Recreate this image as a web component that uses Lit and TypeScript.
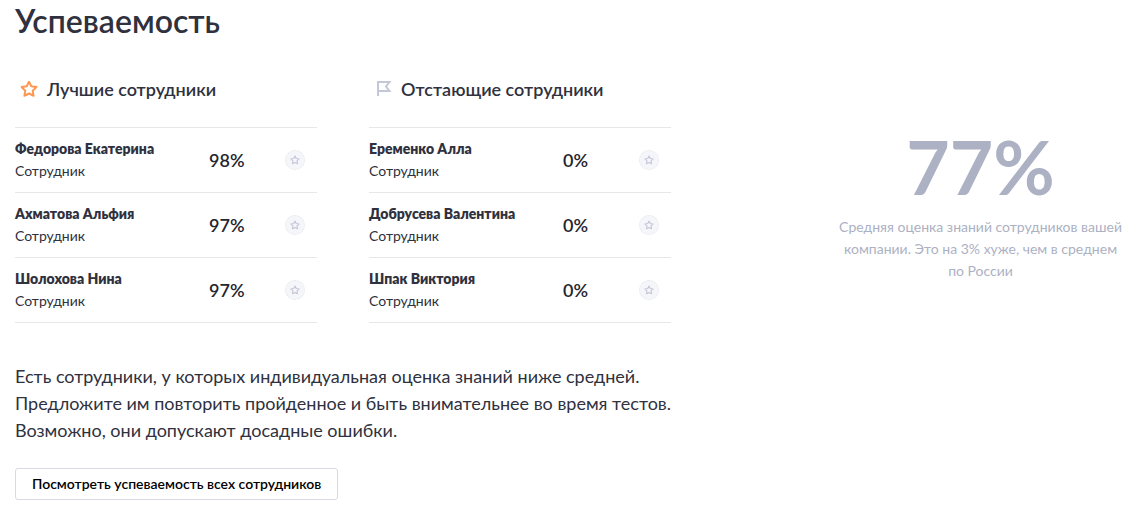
import { LitElement, html, css } from "lit";
import { customElement, property } from "lit/decorators.js";

interface Employee {
  name: string;
  role: string;
  score: number;
}

const best: Employee[] = [
  { name: "Федорова Екатерина", role: "Сотрудник", score: 98 },
  { name: "Ахматова Альфия", role: "Сотрудник", score: 97 },
  { name: "Шолохова Нина", role: "Сотрудник", score: 97 },
];

const lagging: Employee[] = [
  { name: "Еременко Алла", role: "Сотрудник", score: 0 },
  { name: "Добрусева Валентина", role: "Сотрудник", score: 0 },
  { name: "Шпак Виктория", role: "Сотрудник", score: 0 },
];

const starPath =
  "M9 1.8 L11.3 6.3 L16.4 7.1 L12.7 10.7 L13.6 15.8 L9 13.5 L4.4 15.8 L5.3 10.7 L1.6 7.1 L6.7 6.3 Z";

const starIcon = html`<svg class="icon star" viewBox="0 0 18 18" aria-hidden="true">
  <path d=${starPath} />
</svg>`;

const flagIcon = html`<svg class="icon flag" viewBox="0 0 18 18" aria-hidden="true">
  <path d="M4 16 V2 H15.5 L12 6.5 L15.5 11 H4" />
</svg>`;

@customElement("employee-list")
export class EmployeeList extends LitElement {
  @property({ attribute: false }) employees: Employee[] = [];

  static styles = css`
    :host {
      display: block;
    }
    .list {
      list-style: none;
      margin: 0;
      padding: 0;
      border-top: 1px solid #e6e7eb;
    }
    .row {
      display: grid;
      grid-template-columns: 194fr 76fr 32fr;
      align-items: center;
      height: 64px;
      border-bottom: 1px solid #e6e7eb;
    }
    .person {
      font-size: 14px;
      line-height: 22px;
      color: #2f313e;
      white-space: nowrap;
    }
    .name {
      font-weight: 800;
    }
    .score {
      font-size: 18px;
      line-height: 22px;
      font-weight: 600;
      color: #23252f;
    }
    .mark {
      display: flex;
      align-items: center;
      justify-content: center;
      width: 20px;
      height: 20px;
      padding: 0;
      border: 1px dotted #e3e5ee;
      border-radius: 50%;
      box-sizing: border-box;
      background: #f5f6fa;
    }
    .mark svg {
      width: 10px;
      height: 10px;
      fill: none;
      stroke: #c3c7d8;
      stroke-width: 2;
      stroke-linejoin: round;
    }
  `;

  render() {
    return html`<ul class="list">
      ${this.employees.map(
        (e) => html`<li class="row">
          <div class="person">
            <div class="name">${e.name}</div>
            <div>${e.role}</div>
          </div>
          <div class="score">${e.score}%</div>
          <button class="mark" type="button" aria-label="Отметить">
            <svg viewBox="0 0 18 18" aria-hidden="true"><path d=${starPath} /></svg>
          </button>
        </li>`
      )}
    </ul>`;
  }
}

@customElement("app-root")
export class AppRoot extends LitElement {
  static styles = css`
    :host {
      display: block;
      padding: 3px 15px 13px;
      background: #fff;
      color: #2f313e;
      font-family: Lato, Roboto, sans-serif;
    }
    .title {
      margin: 0 0 38px;
      font-size: 32px;
      line-height: 36px;
      font-weight: 600;
    }
    .layout {
      display: grid;
      grid-template-columns: 656fr 285fr;
      column-gap: 167px;
      align-items: start;
    }
    .groups {
      display: grid;
      grid-template-columns: 1fr 1fr;
      column-gap: 52px;
    }
    .heading {
      display: flex;
      align-items: center;
      gap: 9px;
      margin: 0 0 26px;
      padding-left: 5px;
      font-size: 18px;
      line-height: 24px;
      font-weight: 600;
      white-space: nowrap;
    }
    .icon {
      width: 18px;
      height: 18px;
      fill: none;
      stroke-width: 2;
    }
    .star {
      stroke: #ff9650;
      stroke-linejoin: round;
    }
    .flag {
      stroke: #c3c7d8;
    }
    .note {
      margin: 40px 0 24px;
      font-size: 18px;
      line-height: 27px;
      white-space: nowrap;
    }
    .all {
      height: 32px;
      padding: 0 16px;
      border: 1px solid #d8dae4;
      border-radius: 3px;
      background: #fff;
      color: #000;
      font: 600 14px/22px Lato, Roboto, sans-serif;
    }
    .summary {
      padding-top: 49px;
      text-align: center;
      color: #acb1c3;
    }
    .average {
      font-size: 75px;
      line-height: 80px;
      font-weight: 700;
    }
    .text {
      margin: 10px 0 0;
      font-size: 14px;
      line-height: 22px;
      white-space: nowrap;
    }
  `;

  render() {
    return html`
      <h1 class="title">Успеваемость</h1>
      <div class="layout">
        <main>
          <div class="groups">
            <section>
              <h2 class="heading">${starIcon}<span>Лучшие сотрудники</span></h2>
              <employee-list .employees=${best}></employee-list>
            </section>
            <section>
              <h2 class="heading">${flagIcon}<span>Отстающие сотрудники</span></h2>
              <employee-list .employees=${lagging}></employee-list>
            </section>
          </div>
          <p class="note">
            Есть сотрудники, у которых индивидуальная оценка знаний ниже средней.<br />
            Предложите им повторить пройденное и быть внимательнее во время тестов.<br />
            Возможно, они допускают досадные ошибки.
          </p>
          <button class="all" type="button">Посмотреть успеваемость всех сотрудников</button>
        </main>
        <aside class="summary">
          <div class="average">77%</div>
          <p class="text">
            Средняя оценка знаний сотрудников вашей<br />
            компании. Это на 3% хуже, чем в среднем<br />
            по России
          </p>
        </aside>
      </div>
    `;
  }
}
